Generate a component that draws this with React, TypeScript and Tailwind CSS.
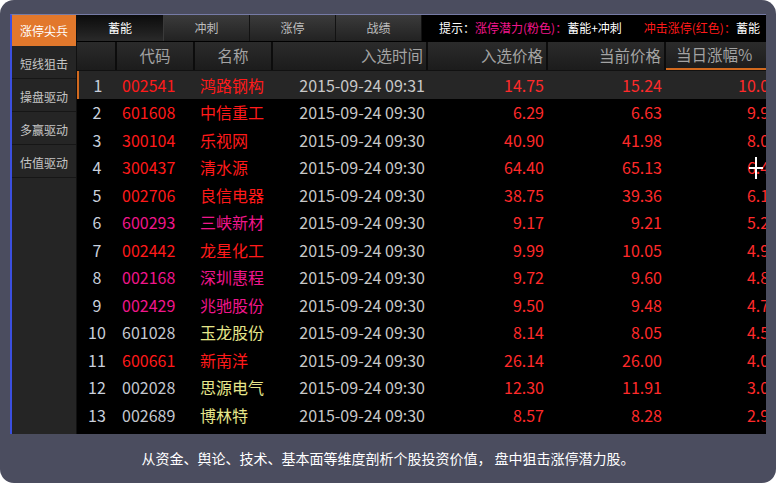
const font = { fontFamily: '"Noto Sans CJK SC", "Noto Sans", sans-serif' };

const sideItems = ["涨停尖兵", "短线狙击", "操盘驱动", "多赢驱动", "估值驱动"];
const tabs = ["蓄能", "冲刺", "涨停", "战绩"];

type Tone = "red" | "pink" | "gray";

const rows: { code: string; name: string; time: string; inPrice: string; cur: string; pct: string; tone: Tone }[] = [
  { code: "002541", name: "鸿路钢构", time: "2015-09-24 09:31", inPrice: "14.75", cur: "15.24", pct: "10.02", tone: "red" },
  { code: "601608", name: "中信重工", time: "2015-09-24 09:30", inPrice: "6.29", cur: "6.63", pct: "9.94", tone: "red" },
  { code: "300104", name: "乐视网", time: "2015-09-24 09:30", inPrice: "40.90", cur: "41.98", pct: "8.03", tone: "red" },
  { code: "300437", name: "清水源", time: "2015-09-24 09:30", inPrice: "64.40", cur: "65.13", pct: "6.46", tone: "red" },
  { code: "002706", name: "良信电器", time: "2015-09-24 09:30", inPrice: "38.75", cur: "39.36", pct: "6.13", tone: "red" },
  { code: "600293", name: "三峡新材", time: "2015-09-24 09:30", inPrice: "9.17", cur: "9.21", pct: "5.24", tone: "pink" },
  { code: "002442", name: "龙星化工", time: "2015-09-24 09:30", inPrice: "9.99", cur: "10.05", pct: "4.98", tone: "red" },
  { code: "002168", name: "深圳惠程", time: "2015-09-24 09:30", inPrice: "9.72", cur: "9.60", pct: "4.81", tone: "pink" },
  { code: "002429", name: "兆驰股份", time: "2015-09-24 09:30", inPrice: "9.50", cur: "9.48", pct: "4.76", tone: "pink" },
  { code: "601028", name: "玉龙股份", time: "2015-09-24 09:30", inPrice: "8.14", cur: "8.05", pct: "4.55", tone: "gray" },
  { code: "600661", name: "新南洋", time: "2015-09-24 09:30", inPrice: "26.14", cur: "26.00", pct: "4.03", tone: "red" },
  { code: "002028", name: "思源电气", time: "2015-09-24 09:30", inPrice: "12.30", cur: "11.91", pct: "3.03", tone: "gray" },
  { code: "002689", name: "博林特", time: "2015-09-24 09:30", inPrice: "8.57", cur: "8.28", pct: "2.99", tone: "gray" },
];

const codeColor: Record<Tone, string> = {
  red: "text-[#ff1a1a]",
  pink: "text-[#f0168c]",
  gray: "text-[#c4c8d0]",
};
const nameColor: Record<Tone, string> = {
  red: "text-[#ff1a1a]",
  pink: "text-[#f0168c]",
  gray: "text-[#e6e68a]",
};

export default function App() {
  return (
    <div className="w-[776px] h-[483px] bg-white" style={font}>
      <div className="w-full h-full rounded-[14px] bg-[#4b4d5f] flex flex-col pt-[14px] px-[10px]">
        <div className="flex h-[420px] border-l-2 border-[#3b4fe0] border-t border-t-[#767ba6] bg-black">
          {/* sidebar */}
          <div className="w-[65px] shrink-0 bg-[#252525] flex flex-col border-r border-[#111]">
            {sideItems.map((s, i) => (
              <div
                key={s}
                className={
                  i === 0
                    ? "h-[31px] flex items-center justify-center bg-[#e2782c] text-white text-[12px]"
                    : "h-[33px] flex items-center justify-center border-b border-[#161616] text-[#c6c6c6] text-[12px] pt-[3px]"
                }
              >
                {s}
              </div>
            ))}
          </div>

          {/* main */}
          <div className="flex-1 flex flex-col overflow-hidden relative">
            <div className="h-[26px] flex shrink-0">
              {tabs.map((t, i) => (
                <div
                  key={t}
                  className={
                    i === 0
                      ? "w-[87px] shrink-0 flex items-center justify-center bg-gradient-to-b from-[#0c0c0c] to-[#2a2a2a] text-white text-[12px] border-r border-[#3a3a3a]"
                      : "w-[86px] shrink-0 flex items-center justify-center bg-gradient-to-b from-[#3b3b3b] to-[#222] text-[#bdbdbd] text-[12px] border-r border-[#121212]"
                  }
                >
                  {t}
                </div>
              ))}
              <div className="flex-1 flex items-center pl-[17px] text-[12px] whitespace-nowrap overflow-hidden bg-black">
                <span className="text-white">提示：</span>
                <span className="text-[#f0168c]">涨停潜力(粉色)：</span>
                <span className="text-white">蓄能+冲刺</span>
                <span className="text-[#ff1a1a] ml-[22px]">冲击涨停(红色)：</span>
                <span className="text-white">蓄能</span>
              </div>
            </div>

            <div className="h-[29px] mt-[1px] flex shrink-0 bg-gradient-to-b from-[#2b2b2b] to-[#1c1c1c] text-[#a3a3a3] text-[15.5px] border-b border-[#111] whitespace-nowrap">
              <div className="w-[40px] shrink-0 border-r-2 border-[#0c0c0c]" />
              <div className="w-[78px] shrink-0 border-r-2 border-[#0c0c0c] flex items-center justify-center">代码</div>
              <div className="w-[78px] shrink-0 border-r-2 border-[#0c0c0c] flex items-center justify-center">名称</div>
              <div className="w-[155px] shrink-0 border-r-2 border-[#0c0c0c] flex items-center justify-end pr-[3px]">入选时间</div>
              <div className="w-[120px] shrink-0 border-r-2 border-[#0c0c0c] flex items-center justify-end pr-[3px]">入选价格</div>
              <div className="w-[118px] shrink-0 border-r-2 border-[#0c0c0c] flex items-center justify-end pr-[3px]">当前价格</div>
              <div className="w-[110px] shrink-0 flex items-center pl-[10px] border-b-2 border-[#d2691e]">当日涨幅%</div>
            </div>

            <div className="flex flex-col text-[16px] whitespace-nowrap">
              {rows.map((r, i) => (
                <div
                  key={r.code}
                  className={
                    i === 0
                      ? "h-[27.5px] flex items-center bg-[#262626] border-l-2 border-[#d2691e]"
                      : "h-[27.5px] flex items-center"
                  }
                >
                  <div className={i === 0 ? "w-[38px] shrink-0 text-center text-[#c9d0dc]" : "w-[40px] shrink-0 text-center text-[#c9d0dc]"}>{i + 1}</div>
                  <div className={`w-[78px] shrink-0 pl-[5px] ${codeColor[r.tone]}`}>{r.code}</div>
                  <div className={`w-[78px] shrink-0 pl-[5px] ${nameColor[r.tone]}`}>{r.name}</div>
                  <div className="w-[155px] shrink-0 text-right pr-[3px] text-[#c8c8c8]">{r.time}</div>
                  <div className="w-[120px] shrink-0 text-right pr-[4px] text-[#ff2a2a]">{r.inPrice}</div>
                  <div className="w-[118px] shrink-0 text-right pr-[4px] text-[#ff2a2a]">{r.cur}</div>
                  <div className="w-[116px] shrink-0 text-right pr-[4px] text-[#ff2a2a]">{r.pct}</div>
                </div>
              ))}
            </div>

            {/* mouse cursor */}
            <div className="absolute left-[672px] top-[142px] w-[14px] h-[22px]">
              <div className="absolute left-[6px] top-0 w-[2px] h-[22px] bg-white" />
              <div className="absolute left-0 top-[10px] w-[14px] h-[2px] bg-white" />
            </div>
          </div>
        </div>

        <div className="flex-1 flex items-center justify-center text-white text-[14px] whitespace-pre">
          从资金、舆论、技术、基本面等维度剖析个股投资价值， 盘中狙击涨停潜力股。
        </div>
      </div>
    </div>
  );
}
